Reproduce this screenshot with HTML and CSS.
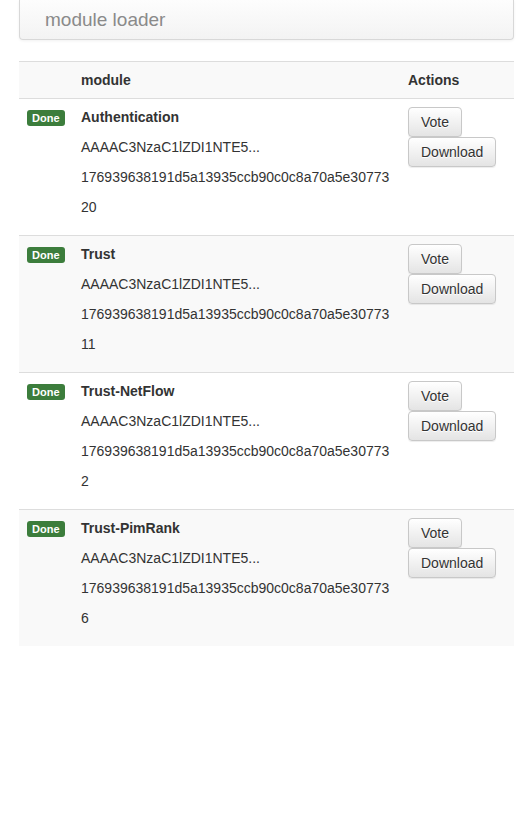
FILE: index.html
```html
<!DOCTYPE html>
<html>
<head>
<meta charset="utf-8">
<title>module loader</title>
<link rel="stylesheet" href="styles.css">
</head>
<body>
<div class="page">
  <div class="navbar"><span class="brand">module loader</span></div>
  <table class="modules">
    <thead>
      <tr><th class="c-status"></th><th class="c-mod">module</th><th class="c-act">Actions</th></tr>
    </thead>
    <tbody>
      <tr>
        <td><span class="label">Done</span></td>
        <td><p class="name">Authentication</p><p>AAAAC3NzaC1lZDI1NTE5...</p><p>176939638191d5a13935ccb90c0c8a70a5e30773</p><p>20</p></td>
        <td><div class="actions"><button class="btn">Vote</button><button class="btn">Download</button></div></td>
      </tr>
      <tr class="alt">
        <td><span class="label">Done</span></td>
        <td><p class="name">Trust</p><p>AAAAC3NzaC1lZDI1NTE5...</p><p>176939638191d5a13935ccb90c0c8a70a5e30773</p><p>11</p></td>
        <td><div class="actions"><button class="btn">Vote</button><button class="btn">Download</button></div></td>
      </tr>
      <tr>
        <td><span class="label">Done</span></td>
        <td><p class="name">Trust-NetFlow</p><p>AAAAC3NzaC1lZDI1NTE5...</p><p>176939638191d5a13935ccb90c0c8a70a5e30773</p><p>2</p></td>
        <td><div class="actions"><button class="btn">Vote</button><button class="btn">Download</button></div></td>
      </tr>
      <tr class="alt">
        <td><span class="label">Done</span></td>
        <td><p class="name">Trust-PimRank</p><p>AAAAC3NzaC1lZDI1NTE5...</p><p>176939638191d5a13935ccb90c0c8a70a5e30773</p><p>6</p></td>
        <td><div class="actions"><button class="btn">Vote</button><button class="btn">Download</button></div></td>
      </tr>
    </tbody>
  </table>
</div>
</body>
</html>
```
FILE: styles.css
```css
html, body {
  margin: 0;
  padding: 0;
  background: #fff;
}
body {
  font-family: "Liberation Sans", Arial, sans-serif;
  font-size: 14px;
  line-height: 20px;
  color: #333;
}
.page {
  padding: 0 18px 0 19px;
}
.navbar {
  height: 39px;
  border: 1px solid #d8d8d8;
  border-top: 0;
  border-radius: 0 0 4px 4px;
  background: linear-gradient(to bottom, #fdfdfd 0%, #f3f3f3 100%);
  box-shadow: 0 1px 3px rgba(0, 0, 0, 0.06);
  box-sizing: content-box;
}
.brand {
  display: block;
  padding: 10px 0 0 25px;
  font-size: 19px;
  line-height: 20px;
  color: #8a8a8a;
}
.modules {
  width: 100%;
  margin-top: 21px;
  border-collapse: collapse;
  border-spacing: 0;
}
.modules th,
.modules td {
  padding: 8px;
  text-align: left;
  vertical-align: top;
  border-top: 1px solid #ddd;
}
.modules thead tr {
  background: #f9f9f9;
}
.modules th {
  font-weight: bold;
  border-bottom: 1px solid #ddd;
}
.c-status { width: 38px; }
.c-act { width: 98px; }
.modules tr.alt {
  background: #f9f9f9;
}
.modules p {
  margin: 0 0 10px;
}
.modules p.name {
  font-weight: bold;
}
.label {
  display: inline-block;
  padding: 3px 5px 2px;
  margin-top: 3px;
  font-size: 11px;
  font-weight: bold;
  line-height: 11px;
  color: #fff;
  background: #3c7d3c;
  border-radius: 3px;
  vertical-align: top;
}
.actions {
  display: flex;
  flex-direction: column;
  align-items: flex-start;
}
.btn {
  font-family: "Liberation Sans", Arial, sans-serif;
  font-size: 14px;
  line-height: 20px;
  padding: 4px 12px;
  color: #333;
  border: 1px solid #c8c8c8;
  border-radius: 4px;
  background: linear-gradient(to bottom, #ffffff 0%, #e4e4e4 100%);
  text-shadow: 0 1px 0 #fff;
  box-shadow: 0 1px 1px rgba(0, 0, 0, 0.075);
  margin: 0;
  cursor: pointer;
}
```
